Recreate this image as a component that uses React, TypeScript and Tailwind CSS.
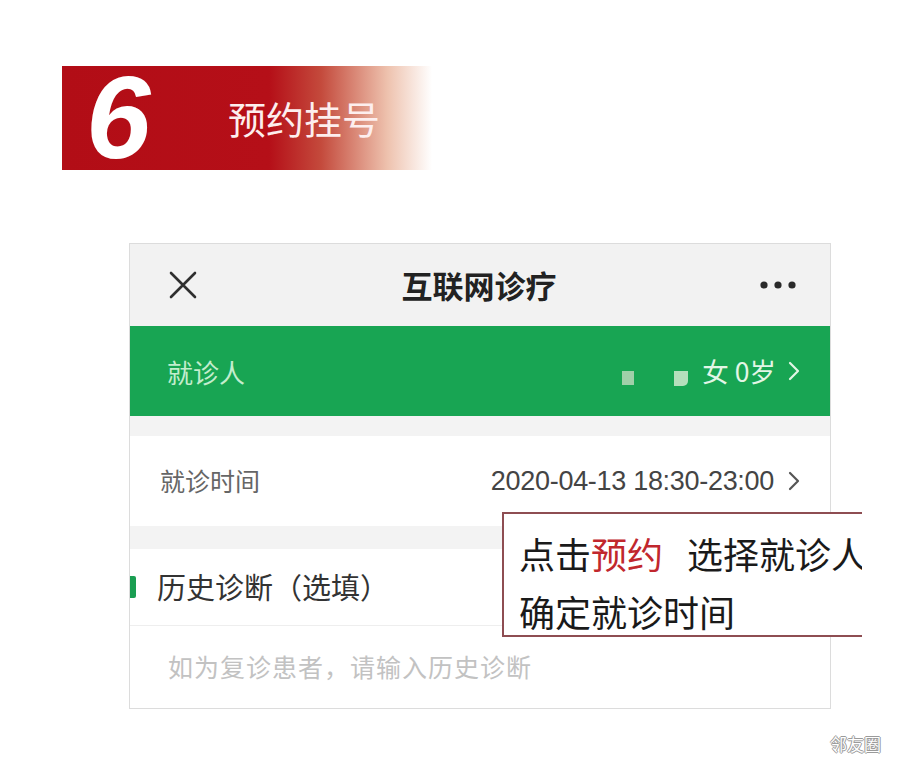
const cjk = "font-['Noto_Sans_CJK_SC','Noto_Sans',sans-serif]";

function CloseIcon() {
  return (
    <svg width="30" height="30" viewBox="0 0 30 30" className="text-[#2f2f2f]">
      <path d="M3 3 L27 27 M27 3 L3 27" stroke="currentColor" strokeWidth="2.6" strokeLinecap="round" />
    </svg>
  );
}

function MoreIcon() {
  return (
    <svg width="36" height="10" viewBox="0 0 36 10" className="text-[#2a2a2a]">
      <circle cx="4" cy="5" r="3.6" fill="currentColor" />
      <circle cx="18" cy="5" r="3.6" fill="currentColor" />
      <circle cx="32" cy="5" r="3.6" fill="currentColor" />
    </svg>
  );
}

function Chevron({ className }: { className: string }) {
  return (
    <svg width="12" height="20" viewBox="0 0 12 20" className={className}>
      <path d="M2 2 L10 10 L2 18" fill="none" stroke="currentColor" strokeWidth="2.2" strokeLinecap="round" strokeLinejoin="round" />
    </svg>
  );
}

function StepBanner() {
  return (
    <div className="ml-[62px] flex h-[104px] w-[370px] items-center bg-[linear-gradient(to_right,#b20d16_0%,#b50f18_56%,#c44a3c_70%,#eec2ae_88%,#ffffff_100%)]">
      <span className="ml-[24px] w-[110px] font-['Liberation_Sans',sans-serif] text-[116px] leading-none font-bold italic text-white">
        6
      </span>
      <span className={`ml-[32px] ${cjk} text-[38px] leading-none text-[#fdeeee]`}>预约挂号</span>
    </div>
  );
}

function PhoneScreen() {
  return (
    <div className={`ml-[129px] mt-[73px] w-[702px] border border-[#dcdcdc] ${cjk}`}>
      <header className="flex h-[82px] items-center justify-between bg-[#f2f2f2] pl-[38px] pr-[34px]">
        <CloseIcon />
        <h1 className="text-[31px] font-bold text-[#222]">互联网诊疗</h1>
        <MoreIcon />
      </header>

      <div className="flex h-[90px] items-center justify-between bg-[#18a553] pl-[37px] pr-[30px]">
        <span className="text-[26px] text-[#c3edcd]">就诊人</span>
        <div className="flex items-center">
          <div className="mt-[14px] h-[14px] w-[12px] bg-[#9fd0a9]" />
          <div className="mt-[14px] ml-[40px] h-[15px] w-[14px] rounded-br-[5px] bg-[#b5dfbc]" />
          <span className="ml-[14px] text-[26.5px] text-[#e2f6e6]">女 0岁</span>
          <Chevron className="ml-[12px] text-[#e2f6e6]" />
        </div>
      </div>

      <div className="h-[20px] bg-[#f3f3f3]" />

      <div className="flex h-[90px] items-center justify-between bg-white pl-[30px] pr-[30px]">
        <span className="text-[25px] text-[#666]">就诊时间</span>
        <div className="flex items-center">
          <span className="font-['Liberation_Sans',sans-serif] text-[27px] tracking-[-0.3px] text-[#444]">
            2020-04-13 18:30-23:00
          </span>
          <Chevron className="ml-[14px] text-[#555]" />
        </div>
      </div>

      <div className="h-[23px] bg-[#f3f3f3]" />

      <div className="flex h-[77px] items-center border-b border-[#eeeeee] bg-white">
        <div className="h-[22px] w-[6px] rounded-r-[2px] bg-[#1a9e52]" />
        <span className="ml-[21px] text-[29px] text-[#333]">历史诊断（选填）</span>
      </div>

      <div className="flex h-[82px] items-center bg-white pl-[38px]">
        <span className="text-[25px] tracking-[1px] text-[#c2c2c2]">如为复诊患者，请输入历史诊断</span>
      </div>
    </div>
  );
}

function Callout() {
  return (
    <div className="absolute left-[502px] top-[512px] h-[125px] w-[360px] overflow-hidden">
      <div className={`h-full w-[420px] border-2 border-[#8e4d52] bg-white pl-[15px] pt-[10px] ${cjk} text-[36px] leading-[58px] text-[#1a1a1a] whitespace-nowrap`}>
        <div>
          点击<span className="text-[#c1272d]">预约</span>
          <span className="ml-[24px]">选择就诊人</span>
        </div>
        <div>确定就诊时间</div>
      </div>
    </div>
  );
}

export default function App() {
  return (
    <div className="relative h-[768px] w-[900px] overflow-hidden bg-white pt-[66px]">
      <StepBanner />
      <PhoneScreen />
      <Callout />
      <span
        className={`absolute left-[830px] top-[731px] ${cjk} text-[17px] text-white [text-shadow:1px_0_0_#9a9a9a,-1px_0_0_#9a9a9a,0_1px_0_#9a9a9a,0_-1px_0_#9a9a9a]`}
      >
        邻友圈
      </span>
    </div>
  );
}
